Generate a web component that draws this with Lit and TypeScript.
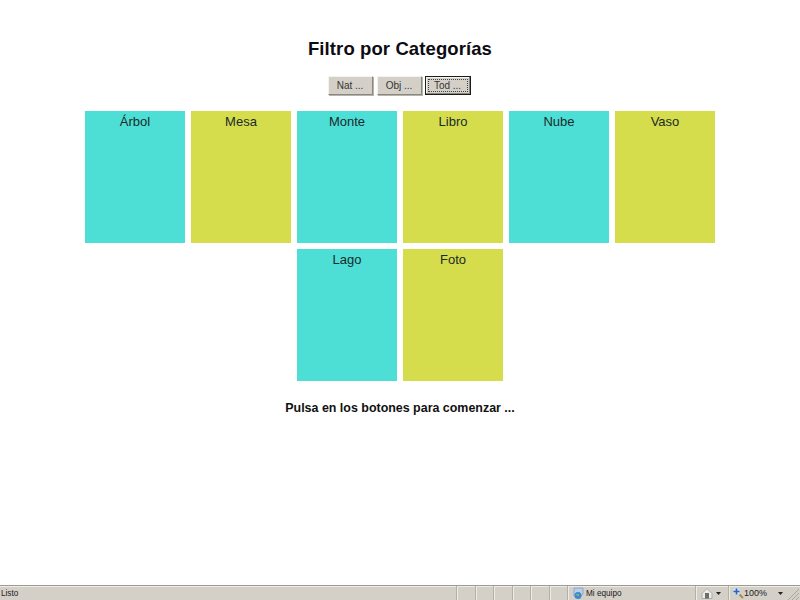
import { LitElement, html, css } from "lit";
import { customElement } from "lit/decorators.js";

const CARDS: [string, string][] = [
  ["Árbol", "nat"], ["Mesa", "obj"], ["Monte", "nat"], ["Libro", "obj"],
  ["Nube", "nat"], ["Vaso", "obj"], ["Lago", "nat"], ["Foto", "obj"],
];

@customElement("app-root")
export class AppRoot extends LitElement {
  static styles = css`
    :host { display: flex; flex-direction: column; width: 800px; height: 600px; background: #fff; font-family: "Liberation Sans", Arial, sans-serif; color: #000; overflow: hidden; }
    .page { flex: 1; display: flex; flex-direction: column; align-items: center; }
    h1 { margin: 38px 0 0; font-size: 18.5px; line-height: 21px; font-weight: bold; letter-spacing: 0.1px; color: #0c0c12; }
    .btns { display: flex; gap: 4px; margin-top: 17px; margin-right: 2px; height: 19px; }
    button { box-sizing: border-box; width: 45px; height: 19px; padding: 0; margin: 0; font: 10px "Liberation Sans", Arial, sans-serif; color: #333; background: #d4d0c8; border: 1px solid; border-color: #f4f3ef #8a8880 #8a8880 #f4f3ef; box-shadow: 1px 1px 0 #b5b3ac; position: relative; }
    button.active { border: 1px solid #1c1c1c; box-shadow: inset -1px -1px 0 #8a8880, inset 1px 1px 0 #f4f3ef; width: 46px; margin-left: -1px; }
    button.active::after { content: ""; position: absolute; inset: 2px; border: 1px dotted #444; }
    .grid { display: flex; flex-wrap: wrap; justify-content: center; gap: 6px; width: 636px; margin-top: 16px; }
    .card { width: 100px; height: 132px; box-sizing: border-box; text-align: center; font-size: 13px; line-height: 15px; padding-top: 3px; color: #1a2a2a; }
    .nat { background: #4ddfd6; }
    .obj { background: #d5dd4d; }
    .msg { margin: 20px 0 0; font-size: 12.45px; line-height: 14px; font-weight: bold; color: #111; }
    .status { height: 15px; flex: none; display: flex; align-items: stretch; background: #d4d0c8; border-top: 1px solid #9d9b94; box-shadow: inset 0 1px 0 #eeece7; font-size: 8.2px; color: #222; box-sizing: border-box; }
    .status > div { box-sizing: border-box; border-left: 1px solid #b3b0a8; box-shadow: inset 1px 0 0 #eeece7; display: flex; align-items: center; white-space: nowrap; }
    .status > .text { flex: 1; border: 0; box-shadow: none; padding-left: 1px; }
    .slot { width: 18.5px; }
    .zone { width: 128px; gap: 2px; padding-left: 4px; }
    .lock { width: 30px; gap: 3px; padding-left: 5px; }
    .zoom { width: 57px; gap: 0; padding-left: 3px; margin-left: 3px; font-size: 9px; }
    .grip { width: 15px; border: 0 !important; box-shadow: none !important; }
    svg { display: block; flex: none; }
  `;

  private caret(ml: number) {
    return html`<svg width="5" height="3" style="margin-left:${ml}px"><path d="M0 0h5L2.5 3z" fill="#222"/></svg>`;
  }

  render() {
    return html`
      <div class="page">
        <h1>Filtro por Categorías</h1>
        <div class="btns">
          <button>Nat ...</button>
          <button>Obj ...</button>
          <button class="active">Tod ...</button>
        </div>
        <div class="grid">
          ${CARDS.map(([t, c]) => html`<div class="card ${c}">${t}</div>`)}
        </div>
        <p class="msg">Pulsa en los botones para comenzar ...</p>
      </div>
      <div class="status">
        <div class="text">Listo</div>
        ${[0, 1, 2, 3, 4, 5].map(() => html`<div class="slot"></div>`)}
        <div class="zone">
          <svg width="12" height="13" viewBox="0 0 12 13"><path d="M2 1h9v6l-2 2H2z" fill="#b9cfe8" stroke="#7f9cc4" stroke-width=".8"/><circle cx="6" cy="8.5" r="3.5" fill="#3f86d6"/><path d="M4 7h3v2H5z" fill="#6cc06a"/></svg>
          Mi equipo
        </div>
        <div class="lock">
          <svg width="12" height="12" viewBox="0 0 12 12"><path d="M1 6.5l5-5 5 5v5H1z" fill="#ecece8" stroke="#a9aba8" stroke-width="1"/><rect x="4" y="6" width="4" height="5.5" fill="#6e6e68"/></svg>
          ${this.caret(0)}
        </div>
        <div class="zoom">
          <svg width="12" height="12" viewBox="0 0 12 12"><circle cx="4.5" cy="4.5" r="3.5" fill="#cfe0f2"/><path d="M4.5 1.5v6M1.5 4.5h6" stroke="#2b62b8" stroke-width="1.6"/><path d="M7.5 7.5l3.5 3.5" stroke="#b08a55" stroke-width="2"/></svg>
          100%
          ${this.caret(11)}
        </div>
        <div class="grip">
          <svg width="15" height="14" viewBox="0 0 15 14"><path d="M3 14L14 3M7 14L14 7M11 14l3-3" stroke="#a8a59d" fill="none"/></svg>
        </div>
      </div>
    `;
  }
}
